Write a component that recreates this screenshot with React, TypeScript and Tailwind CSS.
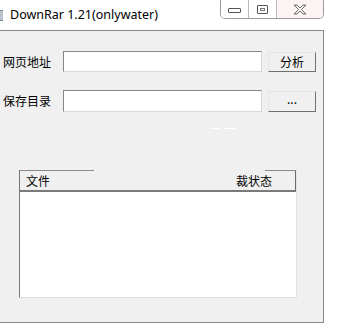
import React from "react";

const cjk = { fontFamily: '"SimSun","Noto Sans CJK SC",sans-serif' };

export default function App() {
  return (
    <div className="w-[338px] h-[331px] bg-white overflow-hidden">
      <div className="w-[324px] flex flex-col">
        {/* title bar */}
        <div className="h-[30px] flex items-start justify-between bg-white">
          <div className="flex items-center h-[30px]">
            <div className="w-[3px] h-[11px] bg-[#b9c4d0] border-y border-[#7f8c99] mt-[1px]" />
            <span
              className="ml-[7px] text-[12.5px] text-black leading-none mt-[1px]"
              style={{ fontFamily: '"Noto Sans","Open Sans",sans-serif' }}
            >
              DownRar 1.21(onlywater)
            </span>
          </div>
          <div className="flex h-[19px] border border-t-0 border-[#9a9a9a] rounded-b-[5px] overflow-hidden">
            <div className="w-[28px] flex items-center justify-center border-r border-[#b8b8b8] bg-white">
              <div className="w-[13px] h-[5px] border border-[#555] rounded-[1px] bg-white mt-[3px]" />
            </div>
            <div className="w-[28px] flex items-center justify-center border-r border-[#b8b8b8] bg-white">
              <div className="w-[11px] h-[9px] border border-[#555] rounded-[1px] flex items-center justify-center">
                <div className="w-[5px] h-[3px] border border-[#777]" />
              </div>
            </div>
            <div className="w-[46px] flex items-center justify-center bg-[#fcf4f2]">
              <svg width="14" height="11" viewBox="0 0 14 11">
                <path
                  d="M1 1 L4 1 L7 4 L10 1 L13 1 L8.5 5.5 L13 10 L10 10 L7 7 L4 10 L1 10 L5.5 5.5 Z"
                  fill="#f4f4f4"
                  stroke="#5a5a5a"
                  strokeWidth="0.9"
                />
              </svg>
            </div>
          </div>
        </div>
        {/* client area */}
        <div className="h-[293px] bg-[#f0f0f0] border-t border-r border-b border-[#888] flex flex-col" style={cjk}>
          <div className="mt-[20px] flex items-center h-[21px]">
            <span className="w-[63px] pl-[3px] text-[12px] text-black">网页地址</span>
            <div className="w-[199px] h-[21px] bg-white border border-[#828790] border-b-[#d8d8d8] border-r-[#d8d8d8]" />
            <button className="ml-[6px] w-[48px] h-[20px] bg-[#f0f0f0] border border-[#e6e6e6] border-b-[#707070] border-r-[#707070] text-[12px] text-black leading-none flex items-center justify-center">
              分析
            </button>
          </div>
          <div className="mt-[18px] flex items-center h-[22px]">
            <span className="w-[63px] pl-[3px] text-[12px] text-black">保存目录</span>
            <div className="w-[199px] h-[22px] bg-white border border-[#828790] border-b-[#d8d8d8] border-r-[#d8d8d8]" />
            <button className="ml-[6px] w-[48px] h-[21px] bg-[#f0f0f0] border border-[#e6e6e6] border-b-[#707070] border-r-[#707070] text-[12px] text-black leading-none flex items-center justify-center pb-[4px]">
              ...
            </button>
          </div>
          <div className="mt-[16px] ml-[210px] flex gap-[4px] h-[1px]">
            <div className="w-[10px] h-[1px] bg-white" />
            <div className="w-[12px] h-[1px] bg-white" />
          </div>
          <div className="mt-[41px] ml-[19px] w-[278px] h-[128px] flex flex-col border-l border-[#777] border-b border-b-[#dcdcdc] border-r border-r-[#e4e4e4] bg-white">
            <div className="h-[22px] flex bg-[#f0f0f0] border-b-2 border-[#7a7a7a]">
              <div className="flex-1 flex flex-col">
                <div className="h-[1px] w-[74px] bg-[#8a8a8a]" />
                <div className="flex-1 flex items-center pl-[6px] text-[12px] text-black">
                  <span>文件</span>
                  <span className="ml-auto mr-[-7px] relative">裁状态</span>
                </div>
              </div>
              <div className="w-[31px] border-t border-[#8a8a8a] border-r border-r-[#6a6a6a]" />
            </div>
            <div className="flex-1 bg-white" />
          </div>
        </div>
      </div>
    </div>
  );
}
